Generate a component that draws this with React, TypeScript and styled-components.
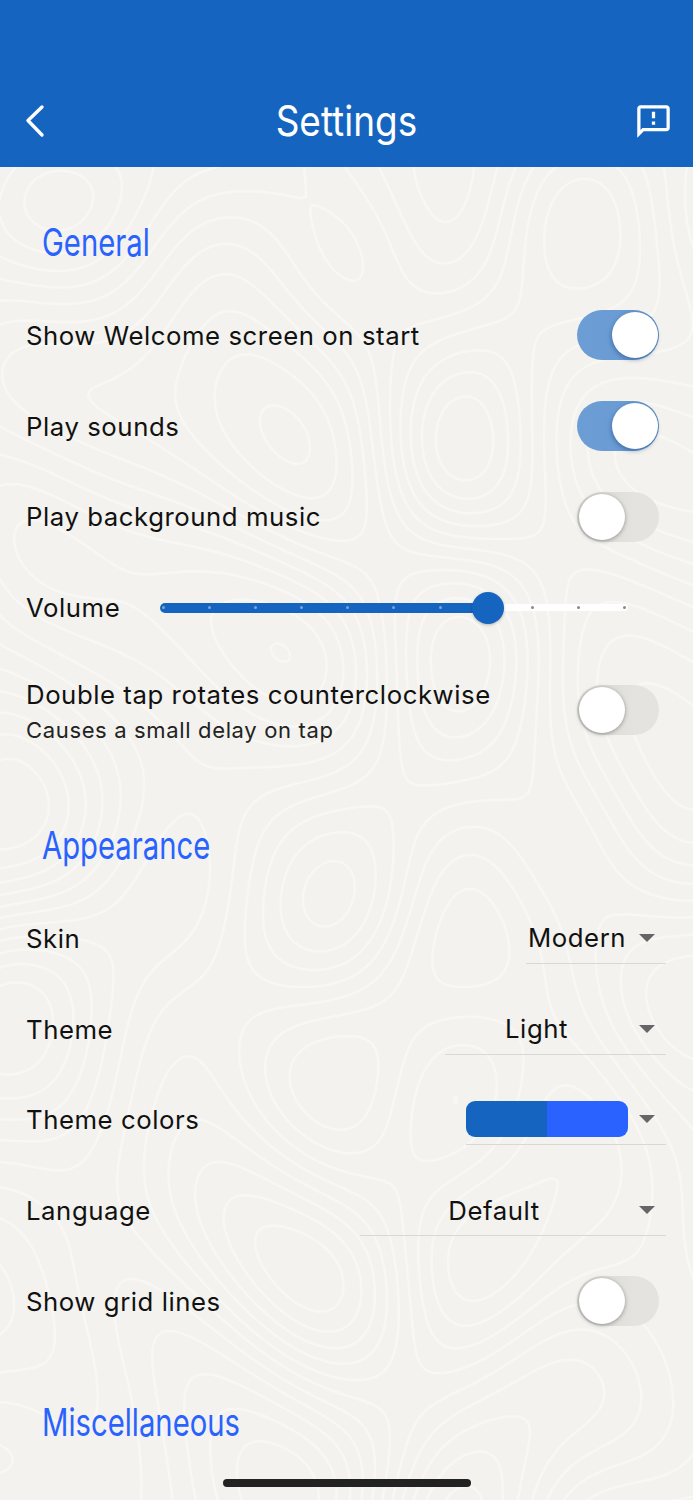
import * as React from "react";
import styled, { createGlobalStyle } from "styled-components";

const GlobalStyle = createGlobalStyle`
  html, body {
    margin: 0;
    padding: 0;
    background: #f3f2ee;
  }
`;

const Page = styled.div`
  position: relative;
  width: 693px;
  height: 1500px;
  overflow: hidden;
  background: #f3f2ee;
  font-family: Inter, "Noto Sans", sans-serif;
  color: #111;
`;

const Contours = styled.svg`
  position: absolute;
  top: 167px;
  left: 0;
  width: 693px;
  height: 1333px;
  fill: none;
  stroke: #f8f7f4;
  stroke-width: 2.5;
  stroke-linecap: round;
`;

const Content = styled.div`
  position: relative;
`;

const Header = styled.header`
  height: 167px;
  box-sizing: border-box;
  background: #1565c0;
  padding: 97px 20px 0 23px;
  display: flex;
  align-items: flex-start;
  justify-content: space-between;
  color: #fff;
`;

const IconSlot = styled.div<{ $end?: boolean }>`
  width: 48px;
  height: 48px;
  display: flex;
  align-items: center;
  justify-content: ${(p) => (p.$end ? "flex-end" : "flex-start")};
`;

const Title = styled.h1`
  margin: 0 0 0 -4px;
  font-size: 42px;
  line-height: 48px;
  font-weight: 400;
  transform: scaleX(0.88);
  white-space: nowrap;
`;

const SectionHead = styled.h2<{ $gap?: number }>`
  margin: ${(p) => p.$gap || 0}px 0 0 0;
  padding: 50px 0 23px 42px;
  height: 50px;
  font-size: 38px;
  line-height: 50px;
  font-weight: 400;
  color: #2962ff;
  transform: scaleX(0.77);
  transform-origin: 42px 0;
  white-space: nowrap;
`;

const Row = styled.div<{ $tall?: boolean }>`
  height: ${(p) => (p.$tall ? 114 : 90.75)}px;
  box-sizing: border-box;
  padding: 0 27px 0 26px;
  display: flex;
  align-items: center;
  justify-content: space-between;
`;

const RowText = styled.div`
  display: flex;
  flex-direction: column;
  padding-top: 2px;
`;

const Label = styled.div`
  font-size: 25.75px;
  line-height: 34px;
  letter-spacing: 0.55px;
  white-space: nowrap;
  padding-top: 1px;
`;

const SubLabel = styled.div`
  font-size: 22px;
  line-height: 30px;
  margin-top: 3px;
  letter-spacing: 0.65px;
  color: #222;
  white-space: nowrap;
`;

const SwitchTrack = styled.div<{ $on?: boolean }>`
  position: relative;
  width: 82px;
  height: 50px;
  margin-right: 7px;
  border-radius: 25px;
  background: ${(p) =>
    p.$on
      ? "linear-gradient(90deg, #6c9dd5, #6a9bd2 55%, #5c8cc4)"
      : "linear-gradient(90deg, #d6d5d2, #e4e3e0 70%)"};
  flex-shrink: 0;
`;

const SwitchThumb = styled.div<{ $on?: boolean }>`
  position: absolute;
  top: 2px;
  left: ${(p) => (p.$on ? 35 : 2)}px;
  width: 46px;
  height: 46px;
  border-radius: 50%;
  background: #fff;
  box-shadow: ${(p) =>
    p.$on ? "-1px 2px 4px rgba(21,60,120,0.4)" : "0 1px 4px rgba(0,0,0,0.35)"};
`;

const Slider = styled.div`
  position: relative;
  width: 468px;
  height: 32px;
  margin-right: 38px;
  display: flex;
  align-items: center;
`;

const SliderRail = styled.div`
  position: absolute;
  left: 0;
  right: 0;
  height: 7px;
  border-radius: 4px;
  background: #fff;
`;

const SliderFill = styled.div`
  position: absolute;
  left: 0;
  height: 10px;
  border-radius: 5px;
  background: #1565c0;
`;

const SliderTicks = styled.div`
  position: absolute;
  left: 2px;
  right: 2px;
  display: flex;
  justify-content: space-between;
`;

const Tick = styled.span<{ $on?: boolean }>`
  width: 3px;
  height: 3px;
  border-radius: 50%;
  background: ${(p) => (p.$on ? "#7ba3d6" : "#8a8a8a")};
`;

const SliderThumb = styled.div`
  position: absolute;
  top: 0;
  width: 32px;
  height: 32px;
  margin-left: -16px;
  border-radius: 50%;
  background: #1565c0;
  box-shadow: 0 1px 3px rgba(0, 0, 0, 0.25);
`;

const Dropdown = styled.div<{ $width: number }>`
  width: ${(p) => p.$width}px;
  height: 50px;
  display: flex;
  align-items: center;
  border-bottom: 1px solid #d9d8d5;
`;

const DropdownValue = styled.div`
  flex: 1;
  text-align: center;
  font-size: 25.75px;
  letter-spacing: 0.55px;
`;

const Caret = styled.div`
  width: 38px;
  display: flex;
  justify-content: center;
  &::after {
    content: "";
    border-left: 8px solid transparent;
    border-right: 8px solid transparent;
    border-top: 8px solid #666;
  }
`;

const Swatch = styled.div`
  flex: 1;
  height: 36px;
  display: flex;
  border-radius: 9px;
  overflow: hidden;
`;

const SwatchPart = styled.div<{ $color: string }>`
  flex: 1;
  background: ${(p) => p.$color};
`;

const HomeBar = styled.div`
  position: absolute;
  left: 223px;
  bottom: 13px;
  width: 248px;
  height: 8px;
  border-radius: 4px;
  background: #222;
`;

// height field for the topographic pattern
function field(x: number, y: number) {
  return (
    Math.sin(x / 75 + 1.9 * Math.sin(y / 120)) +
    0.9 * Math.sin(y / 68 + x / 130 + 1.4 * Math.cos(x / 95)) +
    0.5 * Math.sin((x - 0.6 * y) / 42 + 1)
  );
}

// marching squares, one path per level
function contourPaths() {
  const cell = 6;
  const w = 693;
  const h = 1333;
  const paths: string[] = [];
  for (let level = -2.4; level <= 2.4; level += 0.4) {
    let d = "";
    for (let y = 0; y < h; y += cell) {
      for (let x = 0; x < w; x += cell) {
        const a = field(x, y) - level;
        const b = field(x + cell, y) - level;
        const c = field(x + cell, y + cell) - level;
        const e = field(x, y + cell) - level;
        const pts: string[] = [];
        if (a > 0 !== b > 0) pts.push((x + (cell * a) / (a - b)).toFixed(1) + " " + y);
        if (b > 0 !== c > 0) pts.push(x + cell + " " + (y + (cell * b) / (b - c)).toFixed(1));
        if (e > 0 !== c > 0) pts.push((x + (cell * e) / (e - c)).toFixed(1) + " " + (y + cell));
        if (a > 0 !== e > 0) pts.push(x + " " + (y + (cell * a) / (a - e)).toFixed(1));
        if (pts.length >= 2) d += "M" + pts[0] + "L" + pts[1];
        if (pts.length === 4) d += "M" + pts[2] + "L" + pts[3];
      }
    }
    paths.push(d);
  }
  return paths;
}

function Switch({ on }: { on?: boolean }) {
  return (
    <SwitchTrack $on={on}>
      <SwitchThumb $on={on} />
    </SwitchTrack>
  );
}

function VolumeSlider({ value }: { value: number }) {
  const ticks = Array.from({ length: 11 }, (_, i) => i);
  return (
    <Slider>
      <SliderRail />
      <SliderFill style={{ width: `${value * 100}%` }} />
      <SliderTicks>
        {ticks.map((i) => (
          <Tick key={i} $on={i / 10 <= value} />
        ))}
      </SliderTicks>
      <SliderThumb style={{ left: `${value * 100}%` }} />
    </Slider>
  );
}

export default function App() {
  const lines = React.useMemo(contourPaths, []);
  return (
    <Page>
      <GlobalStyle />
      <Contours viewBox="0 0 693 1333">
        {lines.map((d, i) => (
          <path key={i} d={d} />
        ))}
      </Contours>
      <Content>
        <Header>
          <IconSlot>
            <svg width="24" height="34" viewBox="0 0 24 34" fill="none" stroke="#fff" strokeWidth="3.4" strokeLinecap="round" strokeLinejoin="round">
              <path d="M19 3 L5 16.5 L19 31" />
            </svg>
          </IconSlot>
          <Title>Settings</Title>
          <IconSlot $end>
            <svg width="39" height="39" viewBox="0 0 24 24" fill="#fff">
              <path d="M20 2H4c-1.1 0-2 .9-2 2v18l4-4h14c1.1 0 2-.9 2-2V4c0-1.1-.9-2-2-2zm0 14H5.17L4 17.17V4h16v12zm-9-4h2v2h-2zm0-6h2v4h-2z" />
            </svg>
          </IconSlot>
        </Header>

        <SectionHead>General</SectionHead>
        <Row>
          <Label>Show Welcome screen on start</Label>
          <Switch on />
        </Row>
        <Row>
          <Label>Play sounds</Label>
          <Switch on />
        </Row>
        <Row>
          <Label>Play background music</Label>
          <Switch />
        </Row>
        <Row>
          <Label>Volume</Label>
          <VolumeSlider value={0.7} />
        </Row>
        <Row $tall>
          <RowText>
            <Label>Double tap rotates counterclockwise</Label>
            <SubLabel>Causes a small delay on tap</SubLabel>
          </RowText>
          <Switch />
        </Row>

        <SectionHead $gap={3}>Appearance</SectionHead>
        <Row>
          <Label>Skin</Label>
          <Dropdown $width={140}>
            <DropdownValue>Modern</DropdownValue>
            <Caret />
          </Dropdown>
        </Row>
        <Row>
          <Label>Theme</Label>
          <Dropdown $width={221}>
            <DropdownValue>Light</DropdownValue>
            <Caret />
          </Dropdown>
        </Row>
        <Row>
          <Label>Theme colors</Label>
          <Dropdown $width={200}>
            <Swatch>
              <SwatchPart $color="#1565c0" />
              <SwatchPart $color="#2962ff" />
            </Swatch>
            <Caret />
          </Dropdown>
        </Row>
        <Row>
          <Label>Language</Label>
          <Dropdown $width={306}>
            <DropdownValue>Default</DropdownValue>
            <Caret />
          </Dropdown>
        </Row>
        <Row>
          <Label>Show grid lines</Label>
          <Switch />
        </Row>

        <SectionHead>Miscellaneous</SectionHead>
      </Content>
      <HomeBar />
    </Page>
  );
}
